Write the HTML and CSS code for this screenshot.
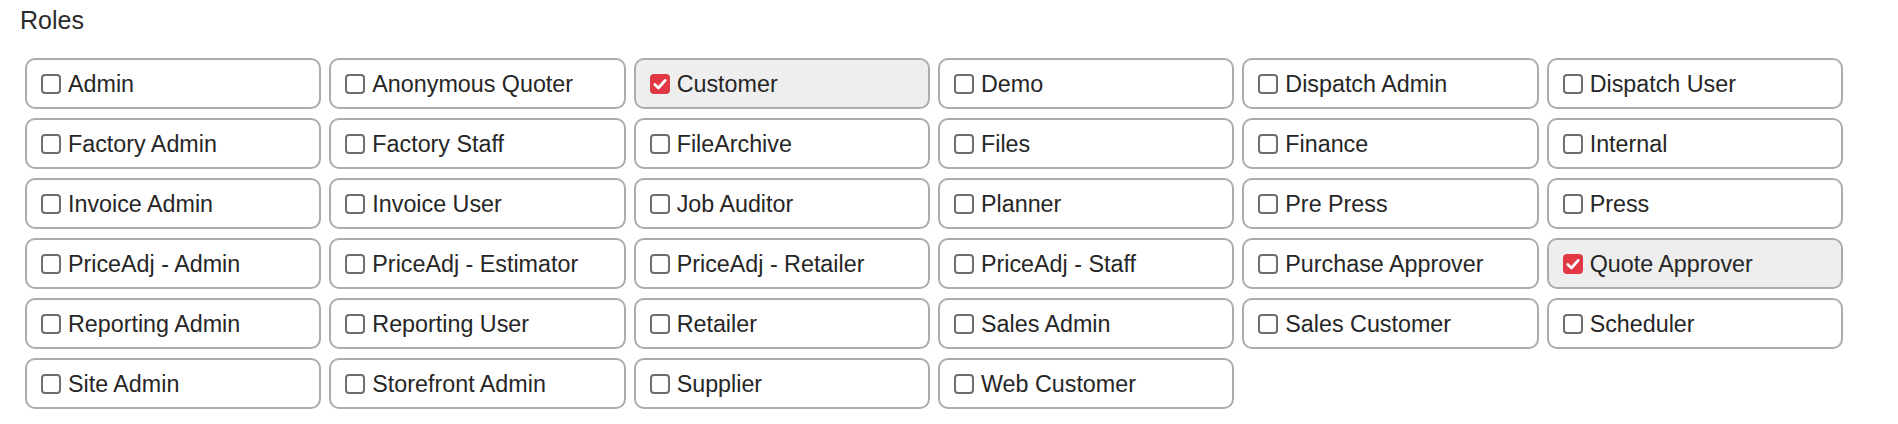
FILE: index.html
```html
<!DOCTYPE html>
<html>
<head>
<meta charset="utf-8">
<link rel="stylesheet" href="styles.css">
</head>
<body>
<div class="panel">
  <div class="title">Roles</div>
  <div class="grid">
    <label class="role"><span class="cb"></span><span class="name">Admin</span></label>
    <label class="role"><span class="cb"></span><span class="name">Anonymous Quoter</span></label>
    <label class="role on"><span class="cb"><svg viewBox="0 0 20 20"><polyline points="4.8,10.4 8.4,14 15.2,6.4"/></svg></span><span class="name">Customer</span></label>
    <label class="role"><span class="cb"></span><span class="name">Demo</span></label>
    <label class="role"><span class="cb"></span><span class="name">Dispatch Admin</span></label>
    <label class="role"><span class="cb"></span><span class="name">Dispatch User</span></label>

    <label class="role"><span class="cb"></span><span class="name">Factory Admin</span></label>
    <label class="role"><span class="cb"></span><span class="name">Factory Staff</span></label>
    <label class="role"><span class="cb"></span><span class="name">FileArchive</span></label>
    <label class="role"><span class="cb"></span><span class="name">Files</span></label>
    <label class="role"><span class="cb"></span><span class="name">Finance</span></label>
    <label class="role"><span class="cb"></span><span class="name">Internal</span></label>

    <label class="role"><span class="cb"></span><span class="name">Invoice Admin</span></label>
    <label class="role"><span class="cb"></span><span class="name">Invoice User</span></label>
    <label class="role"><span class="cb"></span><span class="name">Job Auditor</span></label>
    <label class="role"><span class="cb"></span><span class="name">Planner</span></label>
    <label class="role"><span class="cb"></span><span class="name">Pre Press</span></label>
    <label class="role"><span class="cb"></span><span class="name">Press</span></label>

    <label class="role"><span class="cb"></span><span class="name">PriceAdj - Admin</span></label>
    <label class="role"><span class="cb"></span><span class="name">PriceAdj - Estimator</span></label>
    <label class="role"><span class="cb"></span><span class="name">PriceAdj - Retailer</span></label>
    <label class="role"><span class="cb"></span><span class="name">PriceAdj - Staff</span></label>
    <label class="role"><span class="cb"></span><span class="name">Purchase Approver</span></label>
    <label class="role on"><span class="cb"><svg viewBox="0 0 20 20"><polyline points="4.8,10.4 8.4,14 15.2,6.4"/></svg></span><span class="name">Quote Approver</span></label>

    <label class="role"><span class="cb"></span><span class="name">Reporting Admin</span></label>
    <label class="role"><span class="cb"></span><span class="name">Reporting User</span></label>
    <label class="role"><span class="cb"></span><span class="name">Retailer</span></label>
    <label class="role"><span class="cb"></span><span class="name">Sales Admin</span></label>
    <label class="role"><span class="cb"></span><span class="name">Sales Customer</span></label>
    <label class="role"><span class="cb"></span><span class="name">Scheduler</span></label>

    <label class="role"><span class="cb"></span><span class="name">Site Admin</span></label>
    <label class="role"><span class="cb"></span><span class="name">Storefront Admin</span></label>
    <label class="role"><span class="cb"></span><span class="name">Supplier</span></label>
    <label class="role"><span class="cb"></span><span class="name">Web Customer</span></label>
  </div>
</div>
</body>
</html>
```

FILE: styles.css
```css
html, body {
  margin: 0;
  padding: 0;
  background: #ffffff;
}

body {
  font-family: "Liberation Sans", Arial, sans-serif;
  color: #262626;
}

.panel {
  padding: 6px 55px 0 20px;
}

.title {
  font-size: 25px;
  line-height: 28px;
  color: #2a2a2a;
}

.grid {
  margin: 24px 0 0 5px;
  display: grid;
  grid-template-columns: repeat(6, 1fr);
  column-gap: 8px;
  row-gap: 9px;
}

.role {
  box-sizing: border-box;
  height: 51px;
  display: flex;
  align-items: center;
  gap: 7px;
  padding-left: 14px;
  border: 2px solid #acacac;
  border-radius: 10px;
  background: #ffffff;
  font-size: 23.3px;
  white-space: nowrap;
}

.role.on {
  background: #eeeeee;
}

.cb {
  box-sizing: border-box;
  width: 20px;
  height: 20px;
  flex: none;
  border: 2px solid #6e6e6e;
  border-radius: 4px;
  background: #ffffff;
  display: flex;
  align-items: center;
  justify-content: center;
  margin-top: 1px;
}

.role.on .cb {
  border: none;
  background: #e23744;
}

.cb svg {
  width: 20px;
  height: 20px;
  fill: none;
  stroke: #ffffff;
  stroke-width: 2.8;
  stroke-linecap: round;
  stroke-linejoin: round;
}

.name {
  line-height: 26px;
}
```
